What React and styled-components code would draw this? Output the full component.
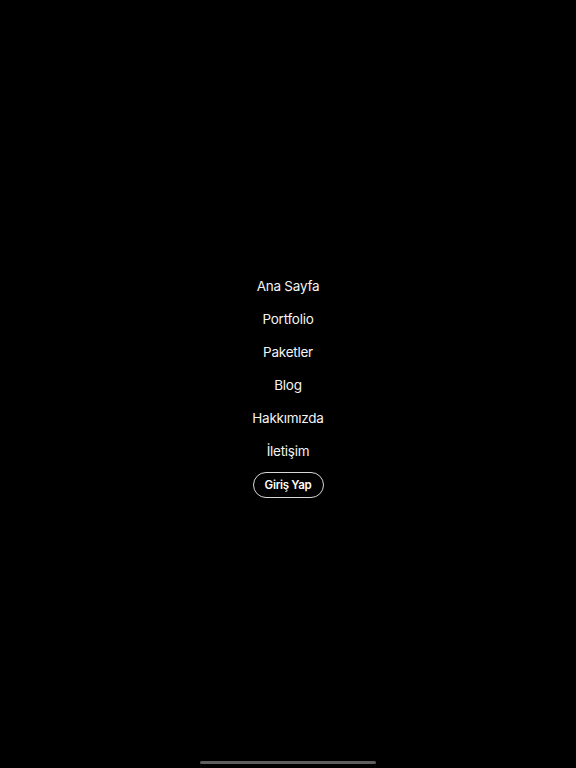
import React from 'react';
import styled, { createGlobalStyle } from 'styled-components';

const GlobalStyle = createGlobalStyle`
    html, body {
        margin: 0;
        padding: 0;
        background: #000;
    }
    body {
        font-family: Inter, "Noto Sans", sans-serif;
        -webkit-font-smoothing: antialiased;
    }
`;

const Screen = styled.div`
    position: relative;
    min-height: 768px;
    box-sizing: border-box;
    padding-top: 6px;
    background: #000;
    display: flex;
    align-items: center;
    justify-content: center;
`;

const Menu = styled.nav`
    display: flex;
    flex-direction: column;
    align-items: center;
    gap: 13px;
`;

const MenuLink = styled.a`
    display: block;
    color: #f4f4f4;
    font-size: 13.5px;
    line-height: 20px;
    text-decoration: none;
    letter-spacing: -0.25px;
    cursor: pointer;
`;

const LoginButton = styled.button`
    margin-top: -2px;
    height: 26px;
    width: 71px;
    box-sizing: border-box;
    border: 1px solid #d8d8d8;
    border-radius: 999px;
    background: transparent;
    color: #fff;
    font-family: Inter, "Noto Sans", sans-serif;
    font-size: 11.5px;
    font-weight: 600;
    letter-spacing: -0.3px;
    padding: 0;
    cursor: pointer;
`;

const HomeIndicator = styled.div`
    position: absolute;
    left: 50%;
    bottom: 4px;
    transform: translateX(-50%);
    width: 176px;
    height: 3px;
    border-radius: 2px;
    background: #5e5e5e;
`;

const links = ['Ana Sayfa', 'Portfolio', 'Paketler', 'Blog', 'Hakkımızda', 'İletişim'];

export default function App() {
    return (
        <Screen>
            <GlobalStyle />
            <Menu>
                {links.map((label) => (
                    <MenuLink key={label}>{label}</MenuLink>
                ))}
                <LoginButton>Giriş Yap</LoginButton>
            </Menu>
            <HomeIndicator />
        </Screen>
    );
}
